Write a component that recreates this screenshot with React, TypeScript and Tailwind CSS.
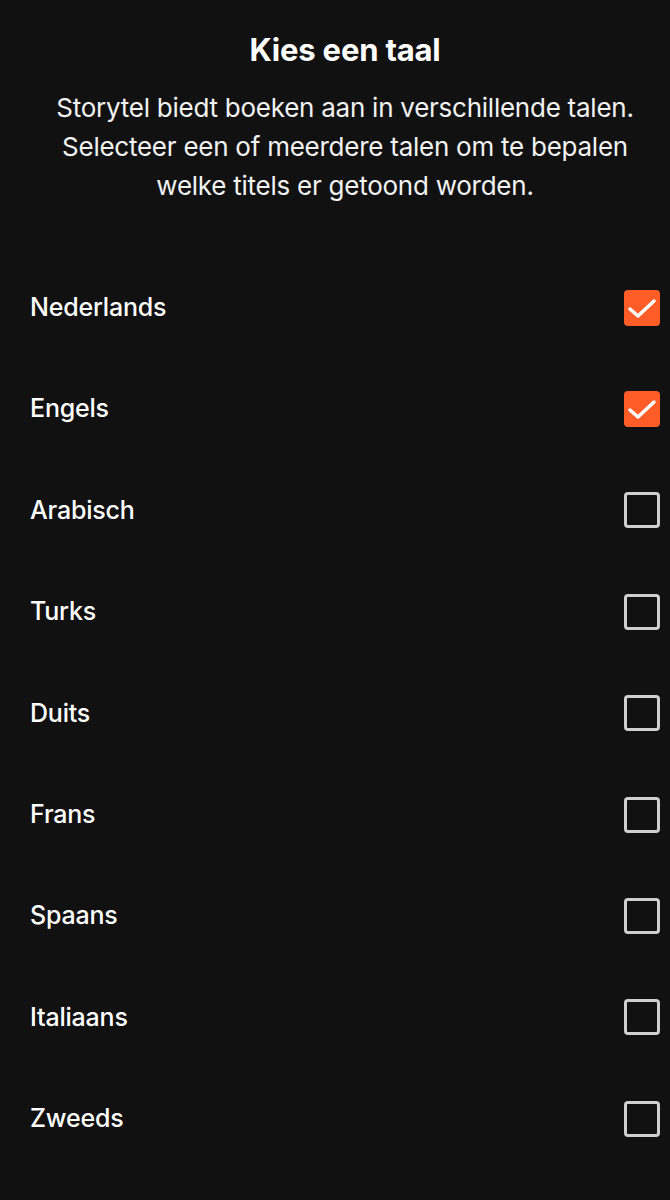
import { useState } from 'react'

const LANGUAGES = [
  'Nederlands',
  'Engels',
  'Arabisch',
  'Turks',
  'Duits',
  'Frans',
  'Spaans',
  'Italiaans',
  'Zweeds',
]

function Checkbox({ checked }: { checked: boolean }) {
  if (checked) {
    return (
      <div className="w-[36px] h-[36px] rounded-[4px] bg-[#ff5c28] flex items-center justify-center">
        <svg width="36" height="36" viewBox="0 0 36 36" fill="none">
          <polyline
            points="6,19 14,26 30,11"
            stroke="white"
            strokeWidth="3.5"
            strokeLinecap="round"
            strokeLinejoin="round"
          />
        </svg>
      </div>
    )
  }
  return <div className="w-[36px] h-[36px] rounded-[4px] border-[3px] border-[#cfcfcf]" />
}

export default function App() {
  const [selected, setSelected] = useState<string[]>(['Nederlands', 'Engels'])

  const toggle = (lang: string) =>
    setSelected((s) => (s.includes(lang) ? s.filter((l) => l !== lang) : [...s, lang]))

  return (
    <div
      className="min-h-[1200px] w-[670px] bg-[#111111] text-white"
      style={{ fontFamily: 'Inter, "Noto Sans", sans-serif' }}
    >
      <div className="pt-[30px] pl-[30px] pr-[10px] text-center">
        <h1 className="text-[31px] leading-[40px] font-bold tracking-[-0.2px]">Kies een taal</h1>
        <p className="mt-[18px] text-[26px] leading-[39px] text-[#f2f2f2] tracking-[-0.25px]">
          Storytel biedt boeken aan in verschillende talen.
          <br />
          Selecteer een of meerdere talen om te bepalen
          <br />
          welke titels er getoond worden.
        </p>
      </div>

      <ul className="mt-[52px]">
        {LANGUAGES.map((lang) => (
          <li
            key={lang}
            onClick={() => toggle(lang)}
            className="h-[101.4px] pl-[30px] pr-[10px] flex items-center justify-between cursor-pointer"
          >
            <span className="text-[25px] font-medium tracking-[-0.2px]">{lang}</span>
            <Checkbox checked={selected.includes(lang)} />
          </li>
        ))}
      </ul>
    </div>
  )
}
